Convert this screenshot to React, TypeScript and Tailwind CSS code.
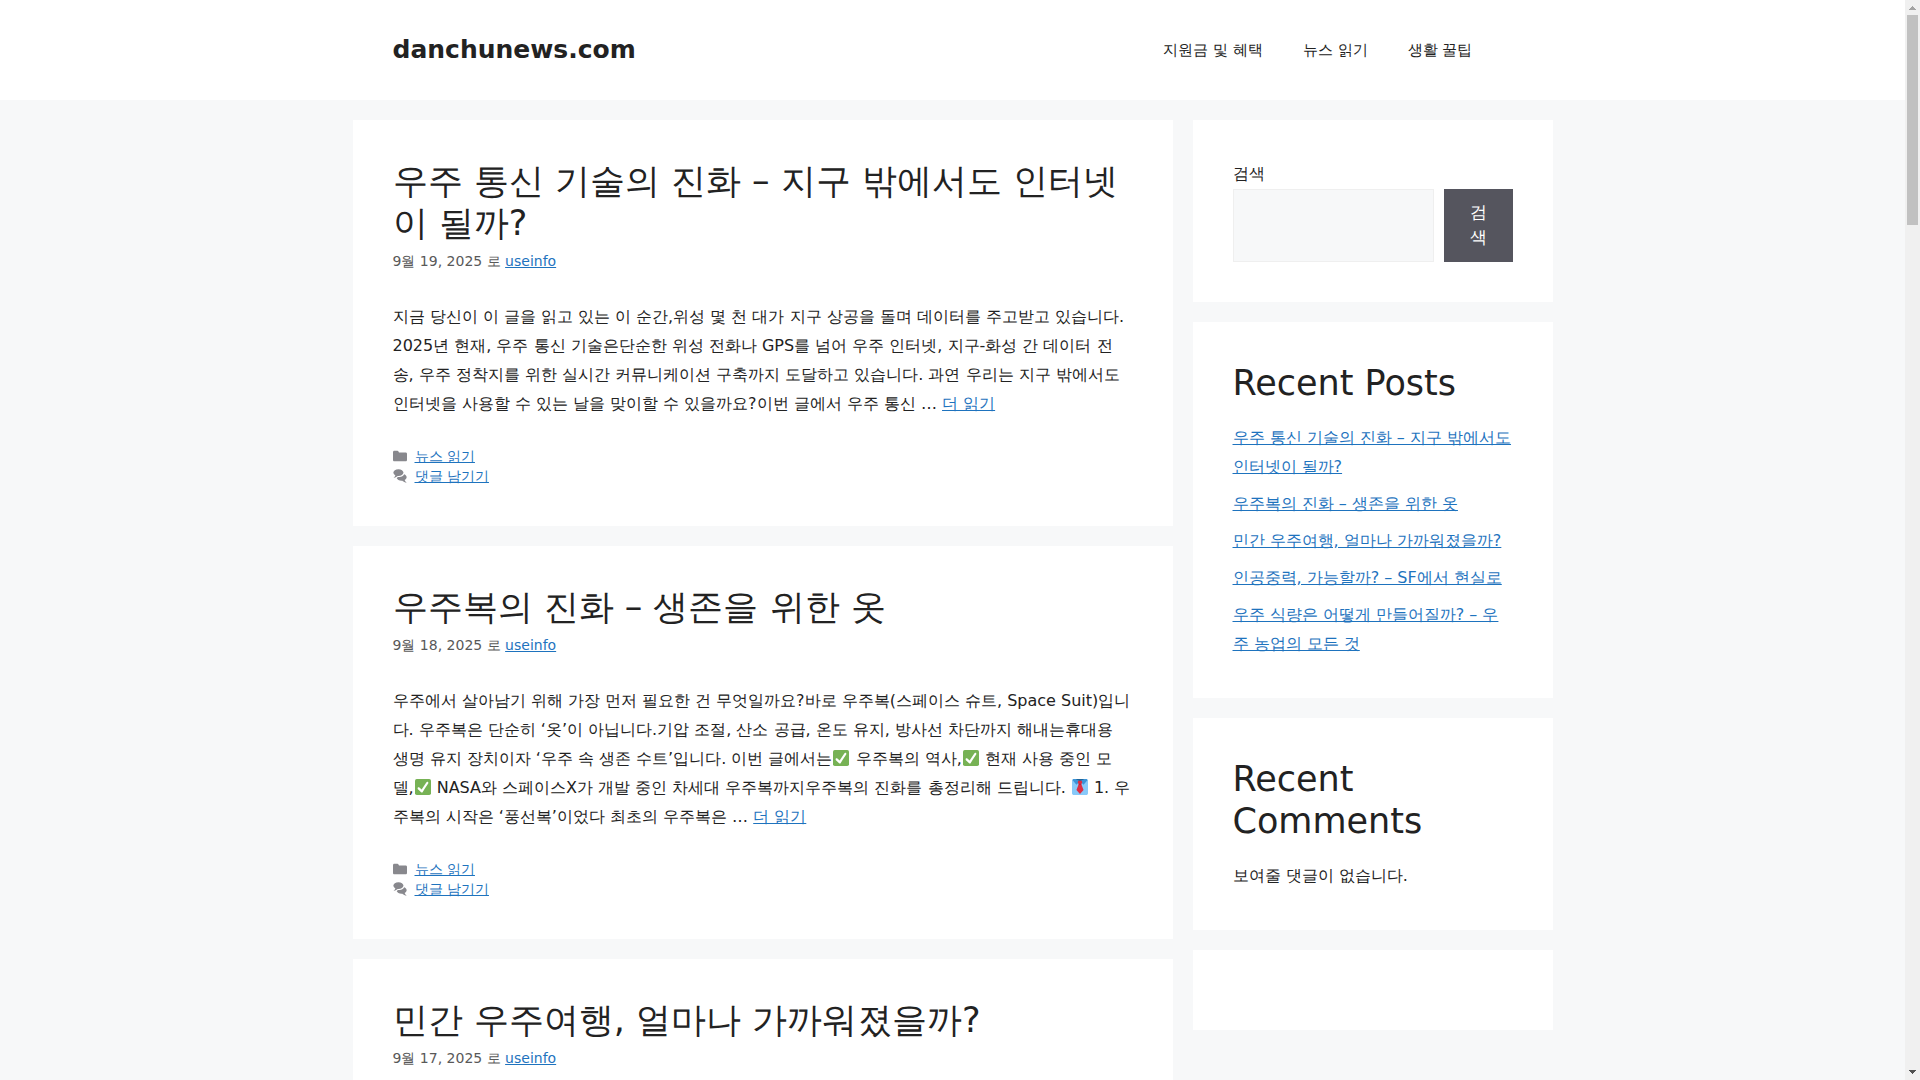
import React from 'react';

interface Post {
  title: string;
  date: string;
  body: React.ReactNode;
}

const NAV_ITEMS = ['지원금 및 혜택', '뉴스 읽기', '생활 꿀팁'];

const RECENT_POSTS = [
  '우주 통신 기술의 진화 – 지구 밖에서도 인터넷이 될까?',
  '우주복의 진화 – 생존을 위한 옷',
  '민간 우주여행, 얼마나 가까워졌을까?',
  '인공중력, 가능할까? – SF에서 현실로',
  '우주 식량은 어떻게 만들어질까? – 우주 농업의 모든 것',
];

const CheckEmoji: React.FC = () => (
  <svg viewBox="0 0 36 36" role="img" aria-label="✅" className="mx-px inline-block h-4 w-4 align-[-2px]">
    <rect width="36" height="36" rx="4" fill="#77b255" />
    <path
      fill="#fff"
      d="M29.28 6.362c-1.156-.751-2.704-.422-3.458.736L14.936 23.877l-5.029-4.65c-1.014-.938-2.596-.875-3.533.138-.937 1.014-.875 2.596.139 3.533l7.209 6.666c.48.445 1.09.665 1.696.665.673 0 1.534-.282 2.099-1.139.332-.506 12.209-18.81 12.209-18.81.752-1.157.421-2.705-.736-3.458z"
    />
  </svg>
);

const NecktieEmoji: React.FC = () => (
  <svg viewBox="0 0 36 36" role="img" aria-label="👔" className="mx-px inline-block h-4 w-4 align-[-2px]">
    <path fill="#88c9f9" d="M32 0H4C2 0 0 2 0 4v28c0 2 2 4 4 4h28c2 0 4-2 4-4V4c0-2-2-4-4-4z" />
    <path fill="#269" d="M7 0h22l-4 5H11z" />
    <path fill="#3b94d9" d="M3 0h5l10 5-8 8L1 2zM33 0h-5L18 5l8 8 9-11z" />
    <path fill="#dd2e44" d="M14 4h8l1 4-2 4 5 13-8 9-8-9 5-13-2-4z" />
    <path fill="#a0041e" d="M15 11h6v1h-6z" />
  </svg>
);

const FolderIcon: React.FC = () => (
  <svg viewBox="0 0 512 512" fill="currentColor" aria-hidden="true" className="h-[14px] w-[14px] text-[#88888d]">
    <path d="M0 112c0-26.51 21.49-48 48-48h110.014a48 48 0 0143.592 27.907l12.349 26.791A16 16 0 00228.486 128H464c26.51 0 48 21.49 48 48v224c0 26.51-21.49 48-48 48H48c-26.51 0-48-21.49-48-48V112z" />
  </svg>
);

const CommentsIcon: React.FC = () => (
  <svg viewBox="0 0 512 512" fill="currentColor" aria-hidden="true" className="h-[14px] w-[14px] text-[#88888d]">
    <path d="M132.838 329.973a435.298 435.298 0 0016.769-9.004c13.363-7.574 26.587-16.142 37.419-25.507 7.544.597 15.27.925 23.098.925 54.905 0 105.634-15.311 143.285-41.28 23.728-16.365 43.115-37.692 54.155-62.645 54.699 22.205 91.498 63.272 91.498 110.286 0 42.186-29.558 79.498-75.09 102.828 23.46 49.216 75.09 101.709 75.09 101.709s-115.837-38.35-154.424-78.46c-9.956 1.12-20.297 1.758-30.793 1.758-88.727 0-162.927-43.071-181.007-100.61z" />
    <path d="M383.371 132.502c0 70.603-82.961 127.787-185.216 127.787-10.496 0-20.837-.639-30.793-1.757-38.587 40.093-154.424 78.429-154.424 78.429s51.63-52.472 75.09-101.67c-45.532-23.321-75.09-60.619-75.09-102.79C12.938 61.9 95.9 4.716 198.155 4.716 300.41 4.715 383.37 61.9 383.37 132.502z" />
  </svg>
);

const TextLink: React.FC<{ children: React.ReactNode }> = ({ children }) => (
  <a href="#" className="text-[#1e73be] underline hover:text-black">
    {children}
  </a>
);

const POSTS: Post[] = [
  {
    title: '우주 통신 기술의 진화 – 지구 밖에서도 인터넷이 될까?',
    date: '9월 19, 2025',
    body: '지금 당신이 이 글을 읽고 있는 이 순간,위성 몇 천 대가 지구 상공을 돌며 데이터를 주고받고 있습니다. 2025년 현재, 우주 통신 기술은단순한 위성 전화나 GPS를 넘어 우주 인터넷, 지구-화성 간 데이터 전송, 우주 정착지를 위한 실시간 커뮤니케이션 구축까지 도달하고 있습니다. 과연 우리는 지구 밖에서도 인터넷을 사용할 수 있는 날을 맞이할 수 있을까요?이번 글에서 우주 통신 …',
  },
  {
    title: '우주복의 진화 – 생존을 위한 옷',
    date: '9월 18, 2025',
    body: (
      <>
        우주에서 살아남기 위해 가장 먼저 필요한 건 무엇일까요?바로 우주복(스페이스 슈트, Space Suit)입니다. 우주복은 단순히 ‘옷’이 아닙니다.기압 조절, 산소 공급, 온도 유지, 방사선 차단까지 해내는휴대용 생명 유지 장치이자 ‘우주 속 생존 수트’입니다. 이번 글에서는
        <CheckEmoji /> 우주복의 역사,
        <CheckEmoji /> 현재 사용 중인 모델,
        <CheckEmoji /> NASA와 스페이스X가 개발 중인 차세대 우주복까지우주복의 진화를 총정리해 드립니다. <NecktieEmoji /> 1. 우주복의 시작은 ‘풍선복’이었다 최초의 우주복은 …
      </>
    ),
  },
  {
    title: '민간 우주여행, 얼마나 가까워졌을까?',
    date: '9월 17, 2025',
    body: '',
  },
];

const PostCard: React.FC<{ post: Post }> = ({ post }) => (
  <article className="bg-white p-10">
    <h2 className="text-[35px] leading-[42px]">
      <a href="#">{post.title}</a>
    </h2>
    <div className="mt-[7px] text-[14px] leading-5 text-[#595959]">
      {post.date} 로 <TextLink>useinfo</TextLink>
    </div>
    {post.body && (
      <p className="mt-[31px]">
        {post.body} <TextLink>더 읽기</TextLink>
      </p>
    )}
    <footer className="mt-7 text-[14px] leading-5">
      <div className="flex items-center gap-2">
        <FolderIcon />
        <TextLink>뉴스 읽기</TextLink>
      </div>
      <div className="flex items-center gap-2">
        <CommentsIcon />
        <TextLink>댓글 남기기</TextLink>
      </div>
    </footer>
  </article>
);

const Widget: React.FC<{ title?: string; children?: React.ReactNode }> = ({ title, children }) => (
  <section className="bg-white p-10">
    {title && <h2 className="mb-[19px] text-[35px] leading-[42px]">{title}</h2>}
    {children}
  </section>
);

const Scrollbar: React.FC = () => (
  <div aria-hidden="true" className="flex w-[15px] shrink-0 flex-col items-center bg-[#f0f0f0]">
    <svg viewBox="0 0 15 15" shapeRendering="crispEdges" className="h-[15px] w-[15px]">
      <path d="M7 6h1v1h1v1h1v1h1v1H4V9h1V8h1V7h1z" fill="#a3a3a3" />
    </svg>
    <div className="h-[210px] w-[11px] bg-[#c1c1c1]" />
    <svg viewBox="0 0 15 15" shapeRendering="crispEdges" className="mt-auto h-[15px] w-[15px]">
      <path d="M4 5h7v1h-1v1H9v1H8v1H7V8H6V7H5V6H4z" fill="#505050" />
    </svg>
  </div>
);

export default function App() {
  return (
    <div className="flex h-screen overflow-hidden bg-[#f7f8f9] font-['DejaVu_Sans',sans-serif] text-base leading-[29px] text-[#222222]">
      <div className="min-w-0 flex-1 overflow-hidden">
        <header className="bg-white">
          <div className="mx-auto flex h-[100px] max-w-[1200px] items-center justify-between px-10">
            <a href="#" className="text-[25px] leading-[30px] font-bold">
              danchunews.com
            </a>
            <nav className="mr-5 flex text-[15px]">
              {NAV_ITEMS.map((item) => (
                <a key={item} href="#" className="px-5">
                  {item}
                </a>
              ))}
            </nav>
          </div>
        </header>

        <div className="mx-auto flex max-w-[1200px] items-start gap-5 pt-5">
          <main className="flex min-w-0 flex-1 flex-col gap-5">
            {POSTS.map((post) => (
              <PostCard key={post.title} post={post} />
            ))}
          </main>

          <aside className="flex w-[30%] flex-col gap-5">
            <Widget>
              <form onSubmit={(e) => e.preventDefault()}>
                <label htmlFor="search" className="mb-px block leading-7">
                  검색
                </label>
                <div className="flex h-[73px] gap-[10px]">
                  <input
                    id="search"
                    type="search"
                    className="min-w-0 flex-1 border border-[#efefef] bg-[#f7f8f9] px-2"
                  />
                  <button type="submit" className="w-[69px] bg-[#55555e] px-[26px] pb-px text-[17px] leading-[25px] text-white">
                    검색
                  </button>
                </div>
              </form>
            </Widget>
            <Widget title="Recent Posts">
              <ul className="space-y-2">
                {RECENT_POSTS.map((title) => (
                  <li key={title}>
                    <TextLink>{title}</TextLink>
                  </li>
                ))}
              </ul>
            </Widget>
            <Widget title="Recent Comments">
              <p>보여줄 댓글이 없습니다.</p>
            </Widget>
            <Widget />
          </aside>
        </div>
      </div>
      <Scrollbar />
    </div>
  );
}
